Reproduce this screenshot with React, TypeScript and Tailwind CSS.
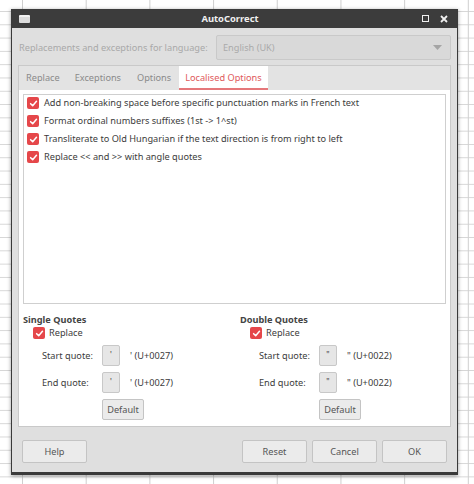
import React from "react";

const font = { fontFamily: '"Noto Sans", "Open Sans", sans-serif' };

const Check = ({ className = "" }: { className?: string }) => (
  <span className={`flex h-[12px] w-[12px] shrink-0 items-center justify-center rounded-[2px] bg-[#e5474a] ${className}`}>
    <svg width="9" height="9" viewBox="0 0 10 10">
      <path d="M1.8 5.2 L4.1 7.4 L8.3 2.6" fill="none" stroke="#fff" strokeWidth="1.7" strokeLinecap="round" strokeLinejoin="round" />
    </svg>
  </span>
);

const Btn = ({ label, className = "" }: { label: string; className?: string }) => (
  <div className={`flex items-center justify-center rounded-[2px] border border-[#c4c4c4] bg-[#ebebeb] text-[#555] ${className}`}>
    {label}
  </div>
);

const items = [
  "Add non-breaking space before specific punctuation marks in French text",
  "Format ordinal numbers suffixes (1st -> 1^st)",
  "Transliterate to Old Hungarian if the text direction is from right to left",
  "Replace << and >> with angle quotes",
];

const QuoteGroup = ({ title, ch, code }: { title: string; ch: string; code: string }) => (
  <div className="flex flex-col">
    <div className="leading-[13px] font-bold text-[#444]">{title}</div>
    <div className="ml-[10px] flex h-[14px] items-center gap-[4px]">
      <Check />
      <span>Replace</span>
    </div>
    <div className="mt-[5px] grid grid-cols-[60px_28px_auto] items-center gap-y-[6px] pl-[19px]">
      <span>Start quote:</span>
      <div className="flex h-[21px] w-[18px] items-start justify-center rounded-[2px] border border-[#c8c8c8] bg-[#e6e6e6] pt-[2px] text-[8px]">{ch}</div>
      <span>{ch} ({code})</span>
      <span>End quote:</span>
      <div className="flex h-[21px] w-[18px] items-start justify-center rounded-[2px] border border-[#c8c8c8] bg-[#e6e6e6] pt-[2px] text-[8px]">{ch}</div>
      <span>{ch} ({code})</span>
      <span />
      <Btn label="Default" className="h-[21px] w-[42px]" />
    </div>
  </div>
);

export default function App() {
  return (
    <div
      style={font}
      className="h-[484px] w-[474px] overflow-hidden bg-white bg-[linear-gradient(to_right,#cfcfcf_1px,transparent_1px),linear-gradient(to_bottom,#d6d6d6_1px,transparent_1px)] bg-[size:63.7px_13.3px] bg-[position:22px_11px] pl-[11px] pt-[9px] text-[9.2px] leading-[14px] text-[#4a4a4a]"
    >
      <div className="flex h-[466px] w-[447px] flex-col border-x border-b-[3px] border-[#3a3a3a] bg-[#dfdfdf] shadow-[0_1px_4px_rgba(0,0,0,0.4)]">
        {/* title bar */}
        <div className="relative flex h-[19px] shrink-0 items-center bg-[#3c3c3c] px-[7px]">
          <div className="h-[8px] w-[11px] rounded-[1px] border-t-[2px] border-[#f2f2f2] bg-[#dcdcdc]" />
          <div className="flex-1 pl-[8px] text-center text-[9.4px] font-bold text-[#f0f0f0]">AutoCorrect</div>
          <div className="mr-[11px] h-[7px] w-[7px] border-[1.5px] border-[#f0f0f0]" />
          <svg width="8" height="8" viewBox="0 0 8 8" className="mr-[2px]">
            <path d="M1 1 L7 7 M7 1 L1 7" stroke="#f0f0f0" strokeWidth="1.8" />
          </svg>
        </div>

        <div className="flex flex-1 flex-col px-[6px]">
          {/* language row */}
          <div className="mt-[7px] flex items-center">
            <span className="w-[198px] pl-[1px] text-[#a9a9a9]">Replacements and exceptions for language:</span>
            <div className="flex h-[25px] flex-1 items-center justify-between rounded-[2px] border border-[#c9c9c9] bg-[#d9d9d9] pl-[6px] pr-[8px] text-[#aaa]">
              <span>English (UK)</span>
              <svg width="9" height="5" viewBox="0 0 9 5">
                <path d="M0 0 H9 L4.5 5 Z" fill="#a5a5a5" />
              </svg>
            </div>
          </div>

          {/* tabs */}
          <div className="mt-[5px] flex flex-col border border-[#c9c9c9]">
            <div className="flex h-[24px] items-stretch bg-[#e3e3e3] text-[#8a8a8a]">
              <div className="flex items-center px-[7px]">Replace</div>
              <div className="flex items-center px-[8px]">Exceptions</div>
              <div className="flex items-center px-[8px]">Options</div>
              <div className="flex items-center border-b-[2px] border-[#e5777a] bg-white px-[6px] pt-[2px] text-[#e0585b]">Localised Options</div>
            </div>
            <div className="flex h-[336px] flex-col bg-white px-[4px] pt-[4px] text-[#3c3c3c]">
              <div className="flex h-[210px] flex-col gap-[4px] border border-[#cfcfcf] px-[3px] pt-[1px]">
                {items.map((t) => (
                  <div key={t} className="flex h-[14px] items-center gap-[5px]">
                    <Check />
                    <span>{t}</span>
                  </div>
                ))}
              </div>
              <div className="mt-[9px] grid grid-cols-[217px_1fr]">
                <QuoteGroup title="Single Quotes" ch="'" code="U+0027" />
                <QuoteGroup title="Double Quotes" ch={'"'} code="U+0022" />
              </div>
            </div>
          </div>

          {/* bottom buttons */}
          <div className="mt-[13px] flex h-[23px] items-stretch gap-[5px] px-[4px]">
            <Btn label="Help" className="w-[65px]" />
            <div className="flex-1" />
            <Btn label="Reset" className="w-[65px]" />
            <Btn label="Cancel" className="w-[65px]" />
            <Btn label="OK" className="w-[65px]" />
          </div>
        </div>
      </div>
    </div>
  );
}
